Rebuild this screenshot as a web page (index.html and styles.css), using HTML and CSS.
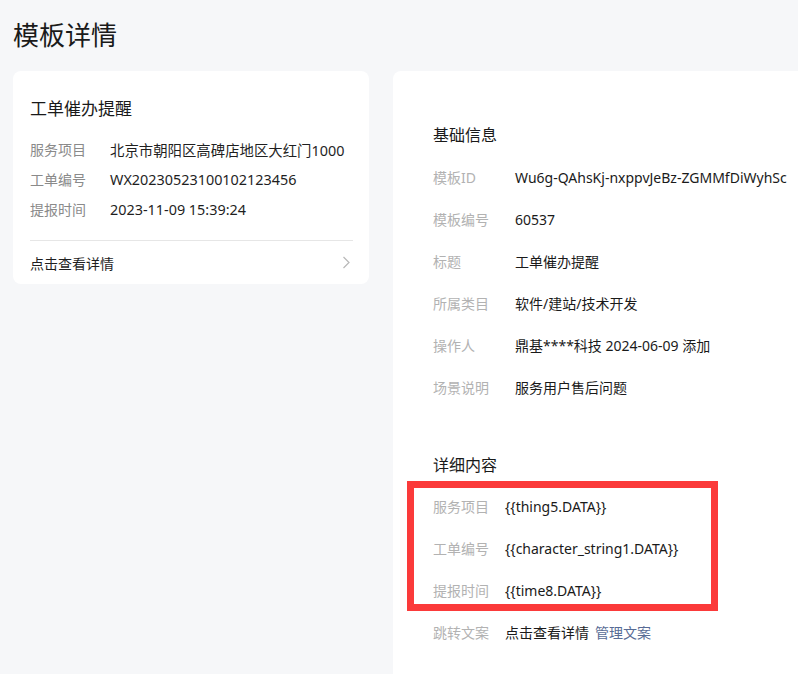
FILE: index.html
```html
<!DOCTYPE html>
<html lang="zh-CN">
<head>
<meta charset="utf-8">
<title>模板详情</title>
<link rel="stylesheet" href="styles.css">
</head>
<body>
<div class="page">
  <h1 class="page-title">模板详情</h1>
  <div class="layout">
    <div class="preview-card">
      <div class="preview-title">工单催办提醒</div>
      <div class="preview-rows">
        <div class="preview-row"><span class="p-label">服务项目</span><span class="p-value">北京市朝阳区高碑店地区大红门1000</span></div>
        <div class="preview-row"><span class="p-label">工单编号</span><span class="p-value">WX20230523100102123456</span></div>
        <div class="preview-row"><span class="p-label">提报时间</span><span class="p-value">2023-11-09 15:39:24</span></div>
      </div>
      <div class="preview-footer">
        <span>点击查看详情</span>
        <svg class="chevron" width="8" height="13" viewBox="0 0 8 13"><polyline points="1.5,1 7,6.5 1.5,12" fill="none" stroke="#b8b8b8" stroke-width="1.2"/></svg>
      </div>
    </div>
    <div class="detail-card">
      <div class="section-title">基础信息</div>
      <div class="info-list">
        <div class="info-row"><span class="i-label">模板ID</span><span class="i-value id-value">Wu6g-QAhsKj-nxppvJeBz-ZGMMfDiWyhSc</span></div>
        <div class="info-row"><span class="i-label">模板编号</span><span class="i-value">60537</span></div>
        <div class="info-row"><span class="i-label">标题</span><span class="i-value">工单催办提醒</span></div>
        <div class="info-row"><span class="i-label">所属类目</span><span class="i-value">软件/建站/技术开发</span></div>
        <div class="info-row"><span class="i-label">操作人</span><span class="i-value">鼎基****科技 2024-06-09 添加</span></div>
        <div class="info-row"><span class="i-label">场景说明</span><span class="i-value">服务用户售后问题</span></div>
      </div>
      <div class="section-title section-title--detail">详细内容</div>
      <div class="highlight-box">
        <div class="info-row compact"><span class="i-label">服务项目</span><span class="i-value">{{thing5.DATA}}</span></div>
        <div class="info-row compact"><span class="i-label">工单编号</span><span class="i-value">{{character_string1.DATA}}</span></div>
        <div class="info-row compact"><span class="i-label">提报时间</span><span class="i-value">{{time8.DATA}}</span></div>
      </div>
      <div class="info-row compact jump-row"><span class="i-label">跳转文案</span><span class="i-value">点击查看详情<a class="link">管理文案</a></span></div>
    </div>
  </div>
</div>
</body>
</html>
```

FILE: styles.css
```css
html, body {
  margin: 0;
  padding: 0;
  background: #f6f7f9;
  overflow: hidden;
}
body {
  font-family: "Noto Sans", "Noto Sans CJK SC", sans-serif;
  color: #1a1a1a;
  width: 798px;
  height: 674px;
}
.page {
  padding: 17px 0 0 13px;
}
.page-title {
  margin: 0;
  font-size: 26px;
  font-weight: 400;
  line-height: 36px;
  color: #1a1a1a;
}
.layout {
  margin-top: 18px;
  display: flex;
  align-items: flex-start;
  gap: 24px;
}
.preview-card {
  flex: 0 0 356px;
  box-sizing: border-box;
  background: #fff;
  border-radius: 8px;
  padding: 26px 16px 0 17px;
}
.preview-title {
  font-size: 17px;
  line-height: 24px;
  color: #1a1a1a;
}
.preview-rows {
  margin-top: 13px;
}
.preview-row {
  display: flex;
  height: 30px;
  align-items: center;
}
.p-label {
  width: 80px;
  flex: 0 0 80px;
  font-size: 14px;
  color: #8a8a8a;
}
.p-value {
  font-size: 14.4px;
  color: #1f1f1f;
  white-space: nowrap;
}
.preview-footer {
  margin-top: 16px;
  border-top: 1px solid #e6e6e6;
  height: 43px;
  display: flex;
  align-items: center;
  justify-content: space-between;
  font-size: 14px;
  color: #1f1f1f;
}
.chevron {
  margin-right: 3px;
  display: block;
}
.detail-card {
  flex: 1 0 auto;
  min-width: 500px;
  height: 700px;
  background: #fff;
  border-radius: 8px 0 0 0;
  padding: 53px 0 0 40px;
  box-sizing: border-box;
  overflow: hidden;
}
.section-title {
  font-size: 16px;
  line-height: 22px;
  color: #1a1a1a;
}
.info-list {
  margin-top: 20px;
  display: flex;
  flex-direction: column;
  gap: 20px;
}
.info-row {
  display: flex;
  align-items: center;
  height: 22px;
  font-size: 14px;
  white-space: nowrap;
}
.i-label {
  flex: 0 0 82px;
  color: #b2b2b2;
}
.i-value {
  color: #1a1a1a;
}
.section-title--detail {
  margin-top: 56px;
}
.highlight-box {
  margin: 5px 0 0 -26px;
  width: 311px;
  box-sizing: border-box;
  border: 7px solid #fb3a3a;
  padding: 7px 0 3px 19px;
  display: flex;
  flex-direction: column;
  gap: 20px;
}
.compact .i-label {
  flex-basis: 72px;
}
.jump-row {
  margin-top: 10px;
}
.link {
  color: #576b95;
  margin-left: 6px;
  text-decoration: none;
}
```
